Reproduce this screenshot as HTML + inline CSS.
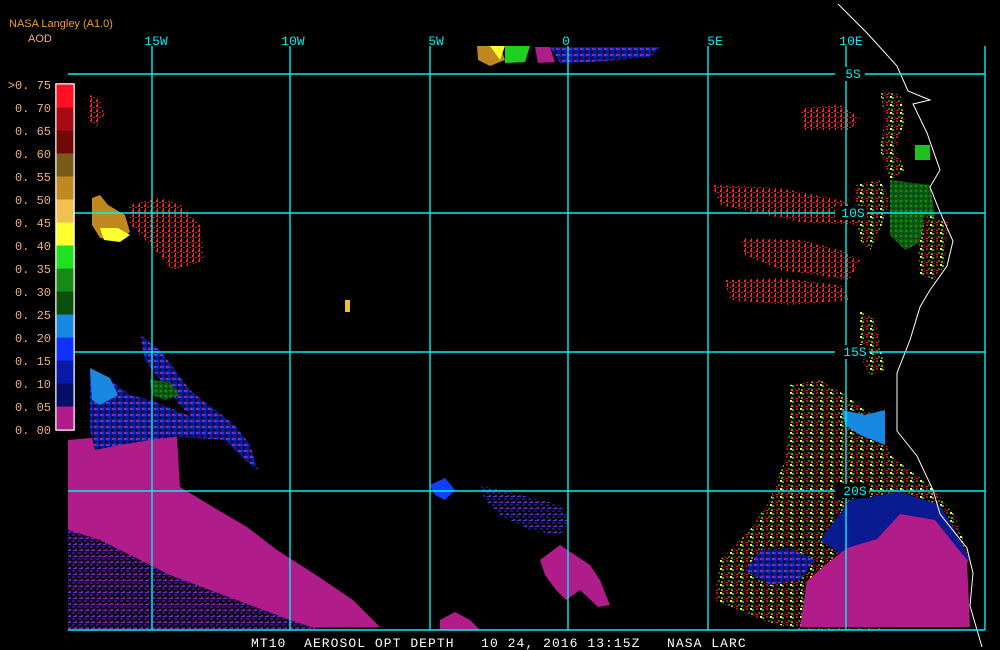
<!DOCTYPE html>
<html><head><meta charset="utf-8"><style>
html,body{margin:0;padding:0;background:#000;width:1000px;height:650px;overflow:hidden}
svg{display:block}
text{font-family:"Liberation Mono","DejaVu Sans Mono",monospace}
</style></head><body>
<svg width="1000" height="650" viewBox="0 0 1000 650" xmlns="http://www.w3.org/2000/svg">
<defs>
<pattern id="redp" width="6" height="5" patternUnits="userSpaceOnUse">
<rect x="0" y="0" width="2" height="2" fill="#ff2020"/><rect x="3" y="2" width="2" height="1" fill="#e01010"/><rect x="1" y="3" width="1" height="2" fill="#ff3030"/>
</pattern>
<pattern id="mix" width="10" height="8" patternUnits="userSpaceOnUse">
<rect width="10" height="8" fill="#000"/>
<rect x="0" y="0" width="2" height="2" fill="#ffff30"/><rect x="2" y="1" width="2" height="2" fill="#20c020"/>
<rect x="6" y="0" width="2" height="2" fill="#b01010"/><rect x="4" y="4" width="2" height="2" fill="#5a0a05"/>
<rect x="1" y="5" width="2" height="2" fill="#c08020"/><rect x="8" y="4" width="2" height="2" fill="#108010"/>
<rect x="6" y="6" width="2" height="1" fill="#ff2020"/><rect x="3" y="7" width="2" height="1" fill="#8a1010"/>
</pattern>
<pattern id="bluep" width="6" height="6" patternUnits="userSpaceOnUse">
<rect width="6" height="6" fill="#0a1a90"/><rect x="0" y="0" width="2" height="2" fill="#1040ff"/><rect x="3" y="3" width="2" height="2" fill="#000"/><rect x="4" y="0" width="2" height="2" fill="#b01c8a"/>
</pattern>
<pattern id="bluedark" width="6" height="6" patternUnits="userSpaceOnUse">
<rect width="6" height="6" fill="#000"/><rect x="0" y="0" width="3" height="2" fill="#0a1a90"/><rect x="3" y="3" width="2" height="2" fill="#1040ff"/><rect x="1" y="4" width="2" height="1" fill="#b01c8a"/>
</pattern>
<pattern id="greenp" width="5" height="5" patternUnits="userSpaceOnUse">
<rect width="5" height="5" fill="#0a5a10"/><rect x="0" y="0" width="2" height="2" fill="#188a18"/><rect x="3" y="3" width="1" height="1" fill="#000"/>
</pattern>
</defs>

<polygon fill="#b01c8a" points="68,440 147,433 177,437 180,487 213,507 247,527 277,550 313,573 353,600 380,627 68,630"/>
<polygon fill="url(#bluedark)" opacity="0.85" points="68,530 100,540 140,560 170,575 210,590 250,605 290,620 320,630 68,630"/>
<polygon fill="#b01c8a" points="540,560 560,545 575,555 590,565 600,580 610,605 598,607 580,590 566,600 556,590 545,575"/>
<polygon fill="#b01c8a" points="440,620 455,612 470,620 480,630 440,630"/>
<polygon fill="url(#bluep)" points="90,370 110,380 130,395 150,400 175,410 200,420 230,440 175,437 150,440 120,445 95,450 90,430"/>
<polygon fill="#1888e0" points="90,368 110,378 118,395 100,405 92,400"/>
<polygon fill="url(#bluep)" points="140,335 160,350 175,370 190,390 215,410 235,425 250,445 258,470 245,460 225,440 200,425 180,405 160,380 145,360"/>
<polygon fill="url(#greenp)" points="150,380 170,382 180,395 165,400 152,395"/>
<polygon fill="#1040ff" points="430,485 445,478 455,490 445,500 435,495"/>
<polygon fill="url(#bluedark)" points="480,485 520,495 560,505 570,520 560,535 530,530 500,515 485,500"/>
<polygon fill="#c08820" points="92,198 100,195 108,205 125,215 130,232 118,240 100,238 92,225"/>
<polygon fill="#ffff30" points="100,228 118,228 130,235 120,242 104,240"/>
<polygon fill="url(#redp)" points="128,205 160,198 180,205 200,225 205,260 190,265 172,270 160,255 145,240 130,225"/>
<polygon fill="url(#redp)" points="90,95 100,100 104,115 95,128 88,118"/>
<rect x="345" y="300" width="5" height="12" fill="#f0c030"/>
<polygon fill="#c08820" points="477,46 500,46 505,60 490,66 478,60"/>
<polygon fill="#ffff30" points="490,46 505,46 500,60"/>
<polygon fill="#20d020" points="505,46 530,46 525,62 505,63"/>
<polygon fill="#b01c8a" points="535,47 550,47 555,62 538,63"/>
<polygon fill="url(#bluep)" points="550,47 660,47 650,57 620,60 590,62 560,63"/>
<polygon fill="url(#redp)" points="712,185 780,188 840,200 870,215 860,225 800,222 720,205"/>
<polygon fill="url(#redp)" points="740,238 800,240 840,250 860,260 850,280 780,270 745,255"/>
<polygon fill="url(#redp)" points="725,280 780,278 840,285 850,300 790,305 730,300"/>
<polygon fill="url(#redp)" points="800,108 840,105 860,118 850,130 805,130"/>
<polygon fill="url(#mix)" points="855,185 880,180 890,200 880,230 870,250 860,240 855,210"/>
<polygon fill="url(#mix)" points="880,90 900,95 905,120 895,150 905,170 890,180 880,150 885,120"/>
<polygon fill="url(#greenp)" points="890,180 930,185 935,215 925,240 905,250 890,235"/>
<polygon fill="#20c020" points="915,145 930,145 930,160 915,160"/>
<polygon fill="url(#mix)" points="925,215 948,220 945,265 935,280 920,275 918,250"/>
<polygon fill="url(#mix)" points="860,310 875,320 880,345 885,370 870,375 860,355"/>
<polygon fill="url(#mix)" points="790,385 820,380 845,395 880,420 890,455 930,485 955,515 970,560 930,600 880,630 800,630 760,620 715,600 720,560 750,530 770,500 785,460 790,420"/>
<polygon fill="#1888e0" points="842,410 865,415 885,410 885,445 860,435 845,425"/>
<polygon fill="url(#bluep)" points="760,550 790,548 815,560 800,580 770,585 745,570"/>
<polygon fill="#0a1a90" points="850,500 900,492 940,505 955,530 970,560 850,560 820,540"/>
<polygon fill="#b01c8a" points="800,627 807,581 825,565 847,548 877,539 900,514 935,520 967,560 970,627"/>
<polyline fill="none" stroke="#fff" stroke-width="1" points="838,4 867,33 897,66 908,91 930,100 913,104 927,133 940,170 930,187 940,212 953,241 947,266 930,290 920,307 910,340 897,373 897,431 917,456 933,490 940,514 967,548 973,573 970,606 982,647"/>
<g stroke="#00f0f0" stroke-width="1.4" fill="none">
<line x1="68" y1="74" x2="985" y2="74"/>
<line x1="68" y1="213" x2="985" y2="213"/>
<line x1="68" y1="352" x2="985" y2="352"/>
<line x1="68" y1="491" x2="985" y2="491"/>
<line x1="68" y1="630" x2="985" y2="630"/>
<line x1="152" y1="46" x2="152" y2="630"/><line x1="290" y1="46" x2="290" y2="630"/>
<line x1="430" y1="46" x2="430" y2="630"/><line x1="568" y1="46" x2="568" y2="630"/>
<line x1="708" y1="46" x2="708" y2="630"/><line x1="846" y1="46" x2="846" y2="630"/>
<line x1="985" y1="46" x2="985" y2="630"/>
</g>
<g fill="#000">
<rect x="835" y="67" width="30" height="14"/><rect x="835" y="206" width="32" height="14"/>
<rect x="835" y="345" width="34" height="14"/><rect x="835" y="484" width="34" height="14"/>
</g>
<g fill="#00f0f0" font-size="13" text-anchor="middle">
<text x="156" y="45">15W</text><text x="293" y="45">10W</text><text x="436" y="45">5W</text>
<text x="566" y="45">0</text><text x="715" y="45">5E</text><text x="851" y="45">10E</text>
<text x="853" y="78">5S</text><text x="853" y="217">10S</text><text x="855" y="356">15S</text><text x="855" y="495">20S</text>
</g>
<text x="9" y="27" fill="#f0a020" font-size="11" style="font-family:'Liberation Sans',sans-serif">NASA Langley (A1.0)</text>
<text x="28" y="42" fill="#f0b080" font-size="11" style="font-family:'Liberation Sans',sans-serif">AOD</text>
<rect x="56" y="84" width="18" height="346" fill="none" stroke="#fff" stroke-width="1.5"/>
<rect x="56.5" y="84.5" width="17" height="23" fill="#ff1020"/>
<rect x="56.5" y="107.5" width="17" height="23" fill="#a80a14"/>
<rect x="56.5" y="130.5" width="17" height="23" fill="#700808"/>
<rect x="56.5" y="153.5" width="17" height="23" fill="#7a5a18"/>
<rect x="56.5" y="176.5" width="17" height="23" fill="#c08820"/>
<rect x="56.5" y="199.5" width="17" height="23" fill="#f0c050"/>
<rect x="56.5" y="222.5" width="17" height="23" fill="#ffff30"/>
<rect x="56.5" y="245.5" width="17" height="23" fill="#20e020"/>
<rect x="56.5" y="268.5" width="17" height="23" fill="#188a18"/>
<rect x="56.5" y="291.5" width="17" height="23" fill="#0a500a"/>
<rect x="56.5" y="314.5" width="17" height="23" fill="#1888e0"/>
<rect x="56.5" y="337.5" width="17" height="23" fill="#1030ff"/>
<rect x="56.5" y="360.5" width="17" height="23" fill="#0a1aa8"/>
<rect x="56.5" y="383.5" width="17" height="23" fill="#060e68"/>
<rect x="56.5" y="406.5" width="17" height="23" fill="#b01c8a"/>
<g fill="#f0b080" font-size="12" text-anchor="end">
<text x="51" y="89">&gt;0. 75</text><text x="51" y="112">0. 70</text><text x="51" y="135">0. 65</text>
<text x="51" y="158">0. 60</text><text x="51" y="181">0. 55</text><text x="51" y="204">0. 50</text>
<text x="51" y="227">0. 45</text><text x="51" y="250">0. 40</text><text x="51" y="273">0. 35</text>
<text x="51" y="296">0. 30</text><text x="51" y="319">0. 25</text><text x="51" y="342">0. 20</text>
<text x="51" y="365">0. 15</text><text x="51" y="388">0. 10</text><text x="51" y="411">0. 05</text>
<text x="51" y="434">0. 00</text>
</g>
<text x="251" y="647" fill="#fff" font-size="13" letter-spacing="1.05" xml:space="preserve">MT10  AEROSOL OPT DEPTH   10 24, 2016 13:15Z   NASA LARC</text>
</svg>
</body></html>
